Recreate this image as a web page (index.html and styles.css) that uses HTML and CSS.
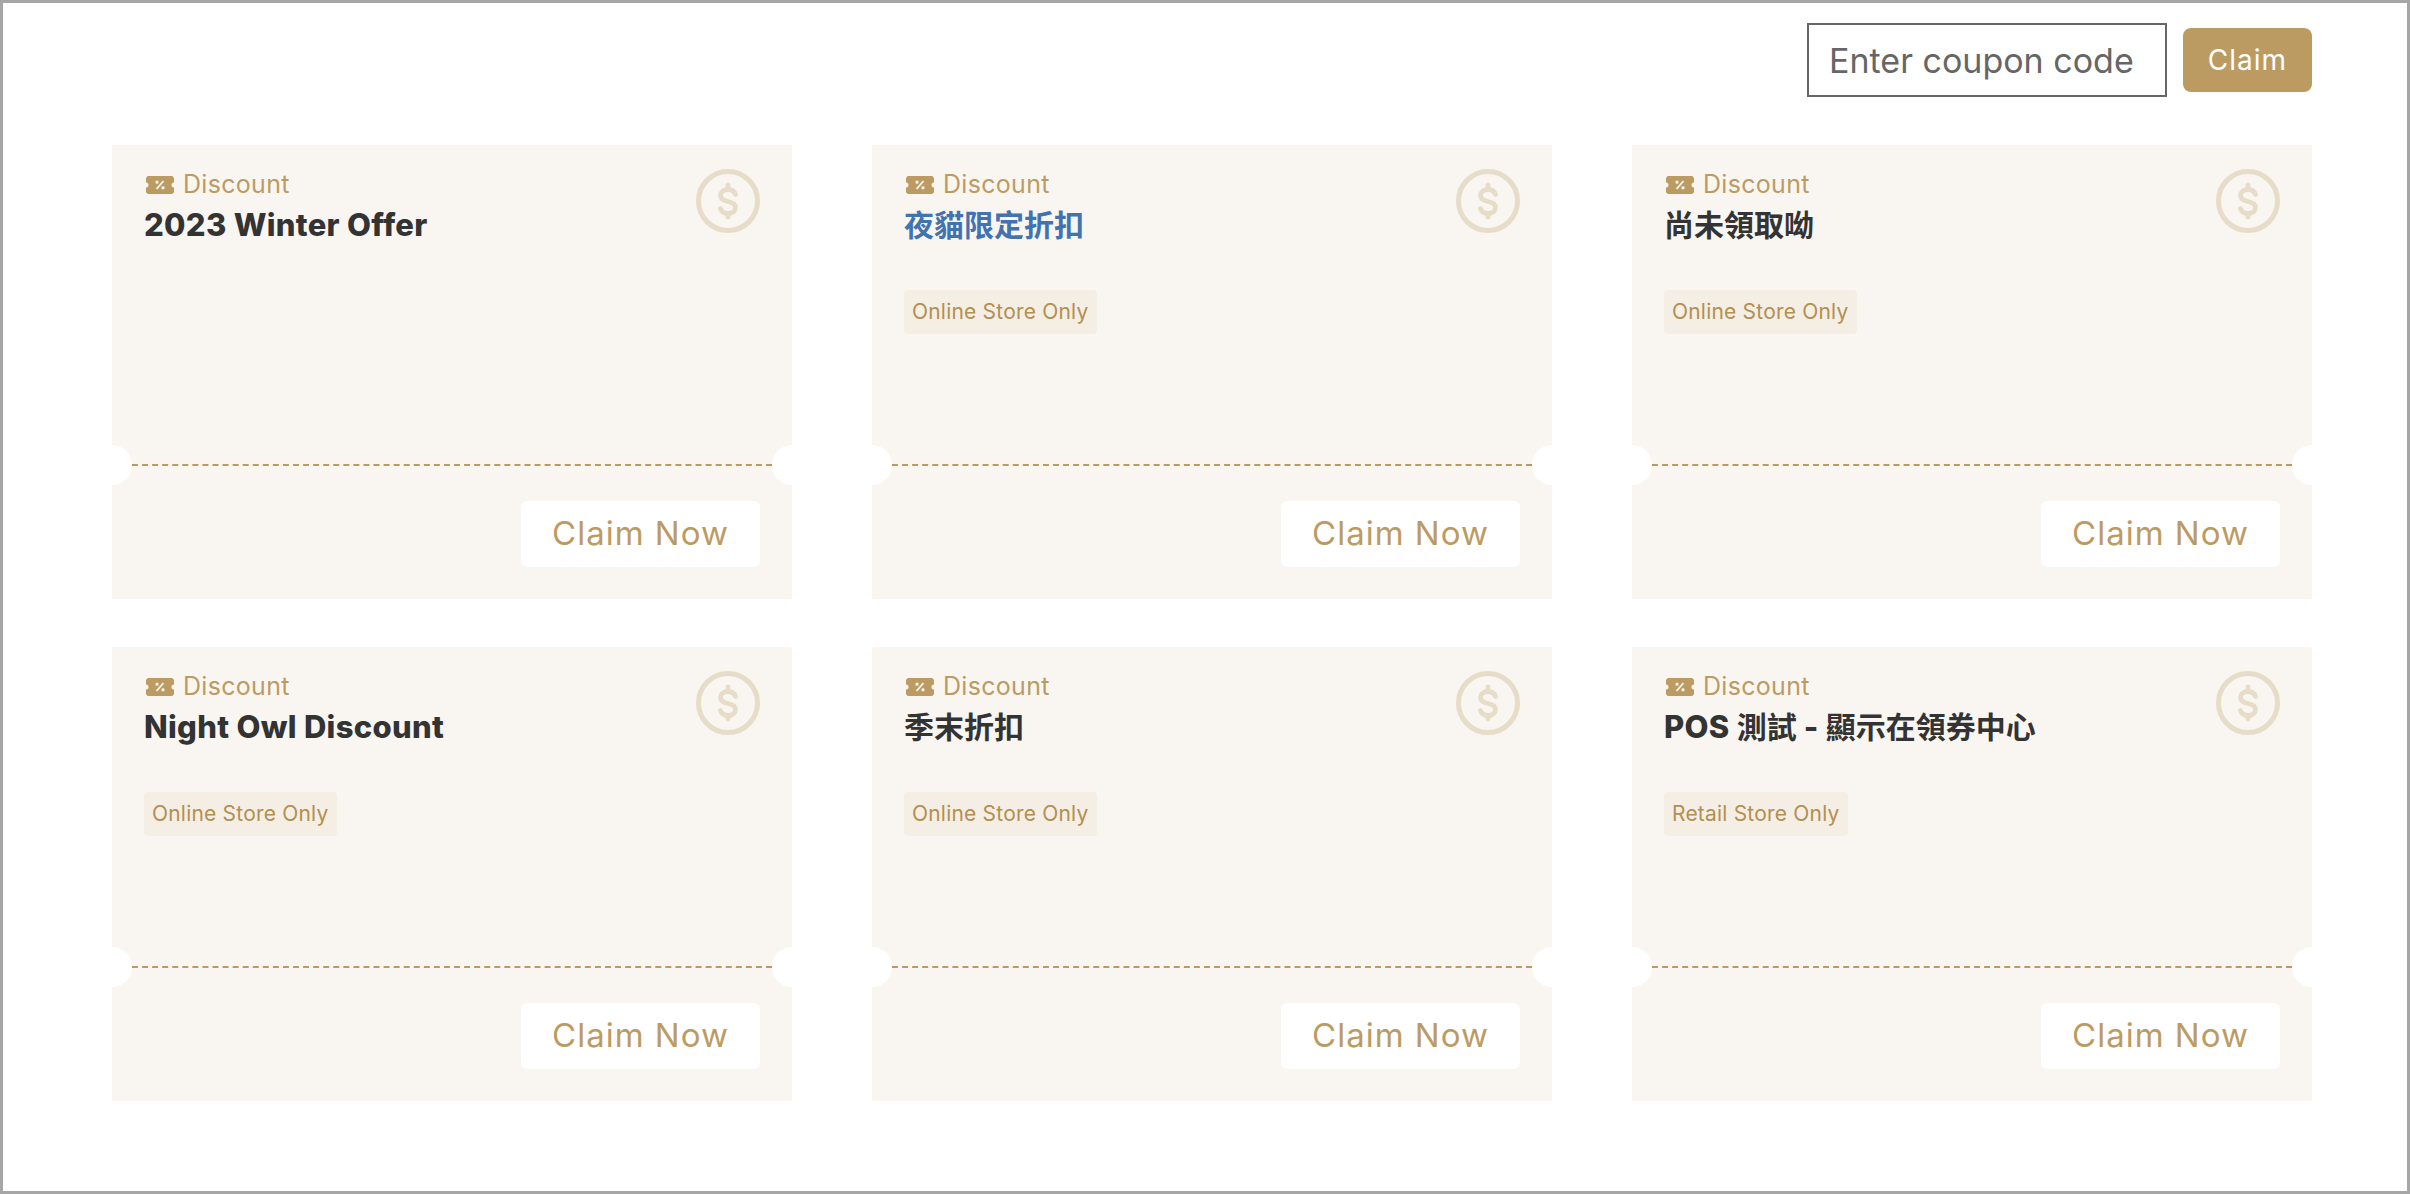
FILE: index.html
```html
<!DOCTYPE html>
<html lang="zh-Hant">
<head>
<meta charset="utf-8">
<title>Coupons</title>
<link rel="stylesheet" href="styles.css">
</head>
<body>
<svg class="defs" width="0" height="0" aria-hidden="true">
  <symbol id="ticket" viewBox="0 0 28 20">
    <path fill="#bc9b63" d="M1.500 1H26.500a1.500 1.500 0 0 0 1.500 1.500V7.500a2.500 2.500 0 0 0 0 5V17.500a1.500 1.500 0 0 0-1.500 1.500H1.500a1.500 1.500 0 0 0-1.500-1.500V12.500a2.500 2.500 0 0 0 0-5V2.500a1.500 1.500 0 0 0 1.500-1.500Z"/>
    <path stroke="#f8f5f0" stroke-width="1.800" fill="none" d="M17.500 6l-7 8"/>
    <rect x="9.600" y="5.800" width="2.800" height="2.800" fill="#f8f5f0"/>
    <rect x="15.600" y="11.400" width="2.800" height="2.800" fill="#f8f5f0"/>
  </symbol>
  <symbol id="coin" viewBox="0 0 64 64">
    <circle cx="32" cy="32" r="29.500" fill="none" stroke="#e6dcc8" stroke-width="5"/>
    <path fill="none" stroke="#e6dcc8" stroke-width="4.800" stroke-linecap="round" d="M39.500 25.500c-1-3-3.800-5-7.500-5-4.600 0-7.500 2.700-7.500 6 0 3.800 3 5 7.500 6 4.700 1 7.500 2.400 7.500 6 0 3.600-3 6-7.500 6-3.800 0-6.600-2-7.500-5M32 16v4M32 44.500V48"/>
  </symbol>
</svg>
<div class="page">
  <header class="claim-bar">
    <input class="code-input" type="text" placeholder="Enter coupon code">
    <button class="claim-btn" type="button">Claim</button>
  </header>
  <main class="grid">
    <article class="card">
      <div class="card-top">
        <div class="kind"><svg class="ticket"><use href="#ticket"/></svg><span>Discount</span></div>
        <h2 class="title"><span class="latin">2023 Winter Offer</span></h2>
        <svg class="coin"><use href="#coin"/></svg>
      </div>
      <div class="tear"></div>
      <div class="card-bottom"><button class="now-btn" type="button">Claim Now</button></div>
    </article>
    <article class="card">
      <div class="card-top">
        <div class="kind"><svg class="ticket"><use href="#ticket"/></svg><span>Discount</span></div>
        <h2 class="title title-blue">夜貓限定折扣</h2>
        <span class="tag">Online Store Only</span>
        <svg class="coin"><use href="#coin"/></svg>
      </div>
      <div class="tear"></div>
      <div class="card-bottom"><button class="now-btn" type="button">Claim Now</button></div>
    </article>
    <article class="card">
      <div class="card-top">
        <div class="kind"><svg class="ticket"><use href="#ticket"/></svg><span>Discount</span></div>
        <h2 class="title">尚未領取呦</h2>
        <span class="tag">Online Store Only</span>
        <svg class="coin"><use href="#coin"/></svg>
      </div>
      <div class="tear"></div>
      <div class="card-bottom"><button class="now-btn" type="button">Claim Now</button></div>
    </article>
    <article class="card">
      <div class="card-top">
        <div class="kind"><svg class="ticket"><use href="#ticket"/></svg><span>Discount</span></div>
        <h2 class="title"><span class="latin">Night Owl Discount</span></h2>
        <span class="tag">Online Store Only</span>
        <svg class="coin"><use href="#coin"/></svg>
      </div>
      <div class="tear"></div>
      <div class="card-bottom"><button class="now-btn" type="button">Claim Now</button></div>
    </article>
    <article class="card">
      <div class="card-top">
        <div class="kind"><svg class="ticket"><use href="#ticket"/></svg><span>Discount</span></div>
        <h2 class="title">季末折扣</h2>
        <span class="tag">Online Store Only</span>
        <svg class="coin"><use href="#coin"/></svg>
      </div>
      <div class="tear"></div>
      <div class="card-bottom"><button class="now-btn" type="button">Claim Now</button></div>
    </article>
    <article class="card">
      <div class="card-top">
        <div class="kind"><svg class="ticket"><use href="#ticket"/></svg><span>Discount</span></div>
        <h2 class="title"><span class="latin">POS</span> 測試 <span class="latin">-</span> 顯示在領券中心</h2>
        <span class="tag">Retail Store Only</span>
        <svg class="coin"><use href="#coin"/></svg>
      </div>
      <div class="tear"></div>
      <div class="card-bottom"><button class="now-btn" type="button">Claim Now</button></div>
    </article>
  </main>
</div>
</body>
</html>
```
FILE: styles.css
```css
* { box-sizing: border-box; }
html, body { margin: 0; padding: 0; background: #fff; }
body { font-family: Inter, "Noto Sans CJK TC", sans-serif; }
.defs { position: absolute; }
.page {
  height: 1194px;
  border: 3px solid #a6a6a6;
  padding: 20px 95px 0 109px;
  overflow: hidden;
}
.claim-bar {
  display: flex;
  justify-content: flex-end;
  align-items: center;
  gap: 16px;
  margin-bottom: 48px;
}
.code-input {
  width: 360px;
  height: 74px;
  border: 2px solid #666;
  border-radius: 0;
  padding: 0 20px;
  font: 400 34px Inter, sans-serif;
  color: #666;
  outline: none;
}
.code-input::placeholder { color: #666; opacity: 1; }
.claim-btn {
  width: 129px;
  height: 64px;
  border: 0;
  border-radius: 8px;
  background: #bc9b63;
  color: #fff;
  font: 400 28px Inter, sans-serif;
  letter-spacing: 1px;
  padding: 0;
}
.grid {
  display: grid;
  grid-template-columns: repeat(3, 680px);
  gap: 48px 80px;
}
.card {
  position: relative;
  height: 454px;
  background: #f9f6f1;
  display: flex;
  flex-direction: column;
}
.card-top {
  position: relative;
  height: 319px;
  padding: 24px 32px 0;
}
.kind {
  display: flex;
  align-items: center;
  gap: 9px;
  height: 30px;
  padding-left: 2px;
  font-size: 25px;
  letter-spacing: .3px;
  color: #bc9b63;
}
.ticket { width: 28px; height: 20px; flex: none; margin-top: 1px; }
.title {
  margin: 5px 0 44px;
  font-size: 30px;
  line-height: 42px;
  font-weight: 700;
  color: #333;
  white-space: nowrap;
}
.latin {
  font-size: 31px;
  font-weight: 800;
  letter-spacing: .3px;
}
.title-blue { color: #4073b0; }
.tag {
  display: inline-block;
  height: 44px;
  line-height: 44px;
  padding: 0 8px;
  border-radius: 4px;
  background: #f4eee5;
  color: #b38f50;
  font-size: 21px;
  letter-spacing: .2px;
}
.coin {
  position: absolute;
  top: 24px;
  right: 32px;
  width: 64px;
  height: 64px;
}
.tear {
  position: relative;
  flex: none;
  height: 2px;
  margin: 0 20px;
  border-top: 2px dashed #bc9b63;
}
.tear::before,
.tear::after {
  content: "";
  position: absolute;
  top: -21px;
  width: 40px;
  height: 40px;
  border-radius: 50%;
  background: #fff;
}
.tear::before { left: -40px; }
.tear::after { right: -40px; }
.card-bottom {
  flex: 1;
  display: flex;
  justify-content: flex-end;
  padding: 35px 32px 0;
}
.now-btn {
  width: 239px;
  height: 66px;
  border: 0;
  border-radius: 6px;
  background: #fff;
  color: #bc9b63;
  font: 400 33px Inter, sans-serif;
  letter-spacing: 1px;
  padding: 0 0 2px;
}
```
